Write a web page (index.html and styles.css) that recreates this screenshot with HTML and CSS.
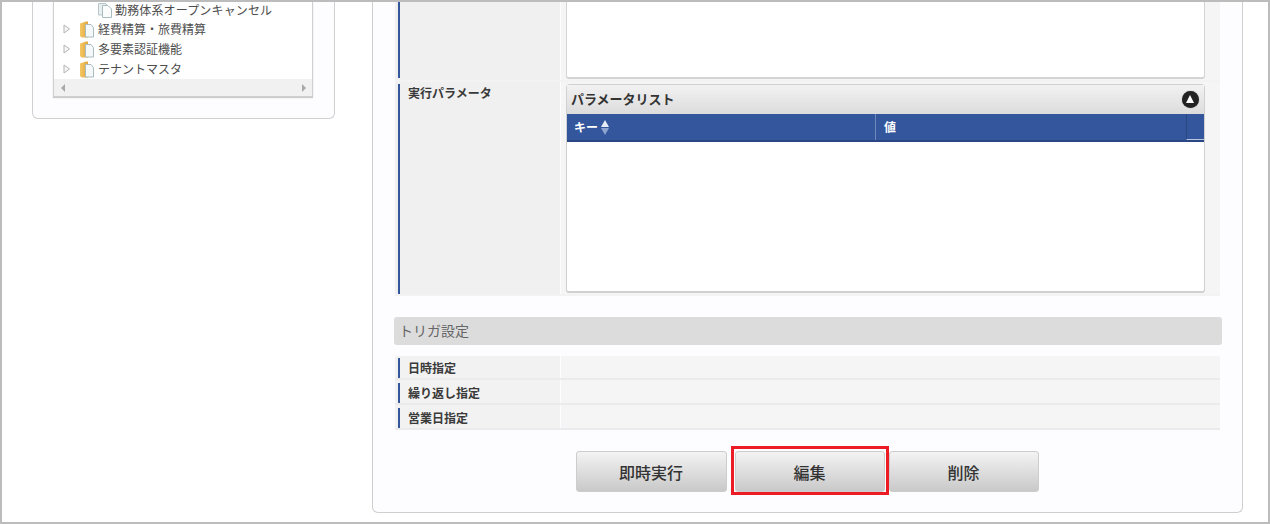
FILE: index.html
```html
<!DOCTYPE html>
<html lang="ja">
<head>
<meta charset="utf-8">
<title>ジョブ詳細</title>
<link rel="stylesheet" href="styles.css">
</head>
<body>
<svg class="defs" width="0" height="0" aria-hidden="true">
  <defs>
    <linearGradient id="folderFill" x1="0" x2="1" y1="0" y2="0">
      <stop offset="0" stop-color="#f5c765"/>
      <stop offset="1" stop-color="#e0a63e"/>
    </linearGradient>
  </defs>
  <symbol id="doc" viewBox="0 0 16 16">
    <path d="M1.500 1.500h7l2.500 2.500v9h-9.500z" fill="#e9eff1" stroke="#b5c5c8"/>
    <path d="M5.500 3.500h5.500l3.500 3.500v8.500h-9z" fill="#fbfdfd" stroke="#a9bcc0"/>
  </symbol>
  <symbol id="folder" viewBox="0 0 16 17">
    <path d="M1 2.500 7 .5h2v16H2.500L1 15z" fill="url(#folderFill)"/>
    <path d="M6.500 3.500h5.500l2.500 3v9.500h-8z" fill="#f4f8f9" stroke="#a9bcc0"/>
  </symbol>
  <symbol id="arrow" viewBox="0 0 8 10">
    <path d="M1 1l5.500 4L1 9z" fill="#f7f7f7" stroke="#b4b4b4"/>
  </symbol>
</svg>
<div class="frame">
  <aside class="side-card">
    <div class="tree">
      <div class="tree-rows">
        <div class="tree-row leaf">
          <svg class="tree-icon"><use href="#doc"/></svg>
          <span>勤務体系オープンキャンセル</span>
        </div>
        <div class="tree-row">
          <svg class="tree-arrow"><use href="#arrow"/></svg>
          <svg class="tree-icon"><use href="#folder"/></svg>
          <span>経費精算・旅費精算</span>
        </div>
        <div class="tree-row">
          <svg class="tree-arrow"><use href="#arrow"/></svg>
          <svg class="tree-icon"><use href="#folder"/></svg>
          <span>多要素認証機能</span>
        </div>
        <div class="tree-row">
          <svg class="tree-arrow"><use href="#arrow"/></svg>
          <svg class="tree-icon"><use href="#folder"/></svg>
          <span>テナントマスタ</span>
        </div>
      </div>
      <div class="hscroll">
        <span class="scroll-arrow left"></span>
        <span class="scroll-arrow right"></span>
      </div>
    </div>
  </aside>
  <main class="main-card">
    <div class="form-row row-top">
      <div class="form-label"><div class="label-bar bar-top"></div></div>
      <div class="form-value value-top"><div class="blank-box"></div></div>
    </div>
    <div class="form-row row-param">
      <div class="form-label"><div class="label-bar bar-param"><span>実行パラメータ</span></div></div>
      <div class="form-value value-param">
        <div class="list-panel">
          <div class="list-title">
            <span>パラメータリスト</span>
            <span class="collapse"></span>
          </div>
          <div class="list-head">
            <div class="col col-key">キー<span class="sort"><i class="up"></i><i class="down"></i></span></div>
            <div class="col col-val">値</div>
            <div class="col col-end"></div>
          </div>
        </div>
      </div>
    </div>
    <h2 class="section">トリガ設定</h2>
    <div class="trigger-row"><div class="trigger-label"><div class="label-bar">日時指定</div></div><div class="trigger-value"></div></div>
    <div class="trigger-row"><div class="trigger-label"><div class="label-bar">繰り返し指定</div></div><div class="trigger-value"></div></div>
    <div class="trigger-row"><div class="trigger-label"><div class="label-bar">営業日指定</div></div><div class="trigger-value"></div></div>
    <div class="actions">
      <button class="btn btn-wide">即時実行</button>
      <span class="highlight"><button class="btn">編集</button></span>
      <button class="btn">削除</button>
    </div>
  </main>
</div>
</body>
</html>
```
FILE: styles.css
```css
* { box-sizing: border-box; }
html, body { margin: 0; padding: 0; background: #fff; }
body { font-family: "Noto Sans CJK JP", "Noto Sans", sans-serif; color: #444; overflow: hidden; }
.defs { position: absolute; }

.frame {
  width: 1270px;
  height: 524px;
  border: 2px solid #bcbcbc;
  padding-left: 30px;
  display: flex;
  align-items: flex-start;
  gap: 37px;
  background: #fff;
  overflow: hidden;
}

/* left card */
.side-card {
  width: 303px;
  height: 117px;
  background: #fdfdff;
  border: 1px solid #d0d0d0;
  border-top: 0;
  border-radius: 0 0 6px 6px;
  padding-left: 20px;
}
.tree {
  width: 260px;
  height: 95px;
  border: 1px solid #cfcfcf;
  border-top: 0;
  background: #fff;
  box-shadow: 0 1px 1px #ccc;
  display: flex;
  flex-direction: column;
}
.tree-rows { flex: 1; padding-left: 9px; }
.tree-row {
  height: 20px;
  display: flex;
  align-items: center;
  font-size: 12px;
  line-height: 20px;
  color: #4d4d4d;
  white-space: nowrap;
}
.tree-row.leaf { padding-left: 34px; height: 15px; margin-bottom: 2px; letter-spacing: .15px; }
.tree-row.leaf .tree-icon { height: 16px; margin-right: 2px; }
.tree-arrow { width: 8px; height: 10px; margin-right: 8px; }
.tree-icon { width: 16px; height: 17px; margin-right: 3px; flex: none; }
.hscroll {
  height: 17px;
  background: #f1f1f1;
  display: flex;
  justify-content: space-between;
  align-items: center;
  padding: 0 6px 0 7px;
}
.scroll-arrow { width: 0; height: 0; border-top: 4px solid transparent; border-bottom: 4px solid transparent; }
.scroll-arrow.left { border-right: 4px solid #a8a8a8; }
.scroll-arrow.right { border-left: 4px solid #a8a8a8; }

/* right card */
.main-card {
  width: 871px;
  height: 511px;
  background: #fdfdff;
  border: 1px solid #cfcfcf;
  border-top: 0;
  border-radius: 0 0 6px 6px;
  padding: 0 21px;
}
.form-row { display: flex; width: 825px; margin-left: 1px; gap: 1px; border-bottom: 2px solid #f3f3f3; }
.row-top { height: 80px; }
.row-param { height: 214px; }
.form-label { width: 165px; background: #f0f0f0; padding-left: 3px; }
.form-value { flex: 1; background: #f5f5f5; padding-left: 5px; }
.label-bar {
  border-left: 2px solid #34569b;
  padding-left: 8px;
  font-size: 12px;
  font-weight: 700;
  color: #3a3a3a;
}
.bar-top { height: 76px; }
.bar-param { height: 210px; margin-top: 2px; line-height: 16px; padding-top: 1px; }
.blank-box {
  width: 639px;
  height: 77px;
  background: #fff;
  border-right: 1px solid #d4d4d4;
  border-bottom: 2px solid #d4d4d4;
  border-left: 1px solid #d4d4d4;
  border-radius: 0 0 3px 3px;
}
.value-param { padding-top: 2px; }
.list-panel {
  width: 639px;
  height: 209px;
  background: #fff;
  border: 1px solid #d0d0d0;
  border-bottom-width: 2px;
  border-radius: 4px 4px 3px 3px;
}
.list-title {
  height: 29px;
  background: linear-gradient(#f2f2f2, #dcdcdc);
  display: flex;
  justify-content: space-between;
  align-items: center;
  padding: 0 5px 2px 4px;
  font-size: 13px;
  font-weight: 700;
  color: #333;
}
.collapse {
  width: 17px;
  height: 17px;
  margin-top: 2px;
  border-radius: 50%;
  background: #222;
  box-shadow: 0 0 1px #777;
  position: relative;
}
.collapse::after {
  content: "";
  position: absolute;
  left: 4px;
  top: 4px;
  border-left: 4.500px solid transparent;
  border-right: 4.500px solid transparent;
  border-bottom: 8px solid #fff;
}
.list-head {
  height: 28px;
  display: flex;
  background: #33569c;
  border-bottom: 2px solid #2a4784;
  color: #fff;
  font-size: 12px;
  font-weight: 700;
  line-height: 26px;
}
.col { padding-left: 7px; }
.col-key { width: 309px; border-right: 1px solid #6f88bb; display: flex; align-items: center; }
.col-val { flex: 1; padding-left: 8px; }
.col-end { width: 18px; padding: 0; border-left: 1px solid #29467f; border-bottom: 1px solid #b9c6e0; }
.sort { display: inline-flex; flex-direction: column; gap: 1px; margin-left: 3px; }
.sort i { display: block; width: 0; height: 0; border-left: 4px solid transparent; border-right: 4px solid transparent; }
.sort .up { border-bottom: 7px solid #e6ecf6; }
.sort .down { border-top: 7px solid #8ea3cd; }

/* section */
.section {
  margin: 21px 0 0;
  width: 828px;
  height: 28px;
  background: #dcdcdc;
  border-radius: 3px;
  font-size: 14px;
  font-weight: 400;
  line-height: 26px;
  padding-left: 5px;
  color: #666;
}
.trigger-row { display: flex; width: 825px; margin-left: 1px; height: 25px; border-bottom: 2px solid #ebebeb; gap: 1px; }
.trigger-label { width: 165px; background: #f2f2f2; padding: 3px 0 0 3px; }
.section + .trigger-row { margin-top: 11px; height: 24px; }
.section + .trigger-row .trigger-label { padding-top: 2px; }
.trigger-label .label-bar { height: 20px; line-height: 20px; }
.trigger-value { flex: 1; background: #f5f5f5; }

/* buttons */
.actions { display: flex; justify-content: center; align-items: flex-start; margin-top: 16px; width: 826px; }
.actions > .btn { margin-top: 5px; }
.btn {
  width: 150px;
  height: 41px;
  border: 1px solid #cdcdcd;
  border-radius: 3px;
  background: linear-gradient(#f3f3f3, #c9c9c9);
  font-family: inherit;
  font-size: 16px;
  font-weight: 500;
  color: #333;
  padding: 0;
  display: block;
}
.btn-wide { width: 151px; }
.highlight {
  display: block;
  height: 49px;
  padding: 2px 1px 0;
  border: 3px solid #ed1c24;
  margin-left: 4px;
}
```
